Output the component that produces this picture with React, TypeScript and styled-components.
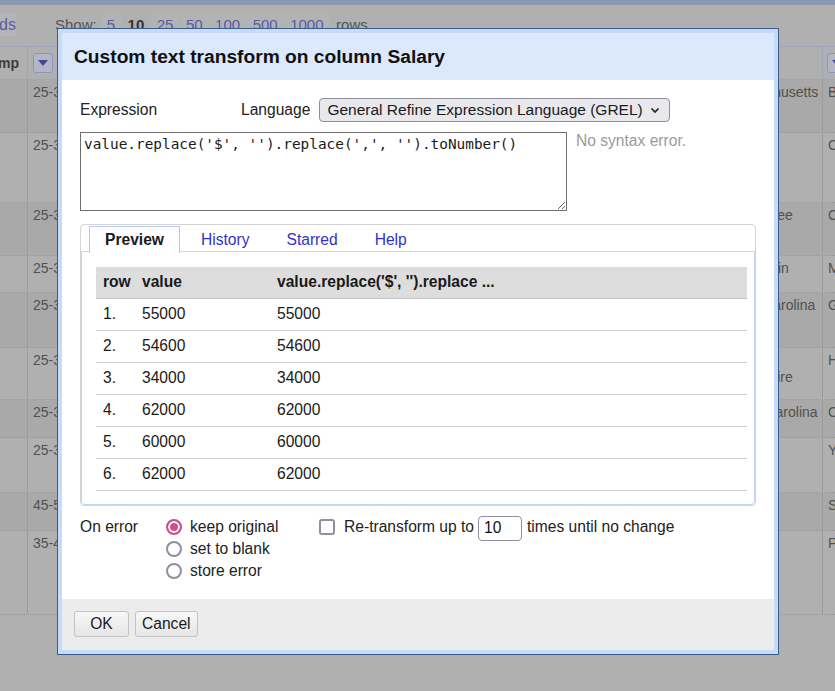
import React from "react";
import styled, { createGlobalStyle } from "styled-components";

const GlobalStyle = createGlobalStyle`
  html, body { margin: 0; padding: 0; }
  body {
    width: 835px;
    height: 691px;
    overflow: hidden;
    background: #b0b0b0;
    font-family: "Liberation Sans", Arial, sans-serif;
  }
`;

/* ---------- dimmed background (grid behind the dialog) ---------- */

const Page = styled.div`
  position: relative;
  width: 835px;
  height: 691px;
  overflow: hidden;
  background: #b0b0b0;
  color: #505050;
`;

const TopStrip = styled.div`
  height: 5px;
  background: #8e99b4;
`;

const Toolbar = styled.div`
  height: 41px;
  display: flex;
  align-items: center;
  font-size: 15px;
  color: #555;
  padding-bottom: 2px;
  box-sizing: border-box;
`;

const ModeLink = styled.div`
  width: 16px;
  height: 23px;
  margin-right: 39px;
  background: #b5b5b7;
  color: #5a5aa8;
  display: flex;
  justify-content: flex-end;
  align-items: center;
  overflow: hidden;
  white-space: nowrap;
  font-size: 16px;
`;

const ShowLabel = styled.span`
  margin-right: 4px;
`;

const PageSize = styled.span<{ $current?: boolean }>`
  padding: 3px 6px;
  margin-right: 0.5px;
  color: ${(p) => (p.$current ? "#333" : "#5a5aa8")};
  font-weight: ${(p) => (p.$current ? "bold" : "normal")};
  background: ${(p) => (p.$current ? "transparent" : "#b3b3b4")};
`;

const RowsLabel = styled.span`
  margin-left: 6px;
`;

const HeaderRow = styled.div`
  height: 34px;
  box-sizing: border-box;
  display: flex;
  border-top: 1px solid #9da5bf;
  border-bottom: 1px solid #9da5bf;
  font-size: 14px;
  font-weight: bold;
  color: #3c3c3c;
`;

const HeadFirst = styled.div`
  width: 28px;
  box-sizing: border-box;
  border-right: 1px solid #9da5bf;
  display: flex;
  justify-content: flex-end;
  align-items: center;
  padding-right: 8px;
  overflow: hidden;
  white-space: nowrap;
`;

const HeadCell = styled.div<{ $w?: number; $pad: number; $line?: boolean }>`
  ${(p) => (p.$w ? `width: ${p.$w}px;` : "flex: 1;")}
  box-sizing: border-box;
  display: flex;
  align-items: center;
  gap: 4px;
  padding-left: ${(p) => p.$pad}px;
  white-space: nowrap;
  overflow: hidden;
  ${(p) => (p.$line ? "border-left: 1px solid #9da5bf;" : "")}
`;

const ColMenu = styled.div`
  width: 20px;
  height: 20px;
  flex: none;
  box-sizing: border-box;
  border: 1px solid #8d93c4;
  border-radius: 3px;
  background: #b5b5c4;
  display: flex;
  align-items: center;
  justify-content: center;
`;

const GridRow = styled.div<{ $h: number; $odd: boolean }>`
  height: ${(p) => p.$h}px;
  box-sizing: border-box;
  display: flex;
  background: ${(p) => (p.$odd ? "#a9a9a9" : "#b0b0b0")};
  border-bottom: 1px dotted #999;
  font-size: 14px;
  line-height: 17px;
  color: #505050;
`;

const CellFirst = styled.div`
  width: 28px;
  box-sizing: border-box;
  border-right: 1px solid #9c9c9c;
`;

const Cell = styled.div<{ $w?: number; $pad: number; $line?: boolean }>`
  ${(p) => (p.$w ? `width: ${p.$w}px;` : "flex: 1;")}
  box-sizing: border-box;
  padding: 4px 0 0 ${(p) => p.$pad}px;
  overflow: hidden;
  ${(p) => (p.$line ? "border-left: 1px solid #9c9c9c; white-space: nowrap;" : "")}
`;

/* ---------- dialog ---------- */

const Dialog = styled.div`
  position: absolute;
  left: 57px;
  top: 28px;
  width: 722px;
  height: 627px;
  box-sizing: border-box;
  border: 1px solid #3a5a8a;
  background: #c6dbf8;
  padding: 4px;
  display: flex;
  flex-direction: column;
  color: #222;
`;

const DialogHeader = styled.div`
  height: 47px;
  flex: none;
  background: #dce8fc;
  padding: 0 12px;
  display: flex;
  align-items: center;
  font-size: 19.2px;
  font-weight: bold;
  color: #111;
`;

const DialogBody = styled.div`
  flex: 1;
  background: #fff;
  padding: 18px 18px 0;
  display: flex;
  flex-direction: column;
  font-size: 15.6px;
`;

const DialogFooter = styled.div`
  height: 51px;
  flex: none;
  box-sizing: border-box;
  background: #ececec;
  padding: 12px 12px;
  display: flex;
  gap: 6px;
  align-items: flex-start;
`;

const ExprHead = styled.div`
  display: flex;
  align-items: center;
  height: 24px;
`;

const ExprLabel = styled.div`
  width: 161px;
`;

const LangLabel = styled.div`
  margin-right: 9px;
`;

const SelectBox = styled.div`
  width: 351px;
  height: 24px;
  box-sizing: border-box;
  border: 1px solid #8f8f9d;
  border-radius: 4px;
  background: #e9e9ed;
  display: flex;
  align-items: center;
  justify-content: space-between;
  padding: 0 9px 0 7px;
  font-size: 15.5px;
  color: #1a1a1a;
`;

const ExprRow = styled.div`
  display: flex;
  align-items: flex-start;
  margin-top: 10px;
`;

const ExprInput = styled.textarea`
  width: 487px;
  height: 79px;
  box-sizing: border-box;
  margin: 0;
  border: 1px solid #6e6e6e;
  padding: 3px 3px;
  font-family: "DejaVu Sans Mono", monospace;
  font-size: 14.4px;
  line-height: 17px;
  color: #1a1a1a;
  resize: both;
  outline: none;
`;

const Status = styled.div`
  margin-left: 9px;
  margin-top: 0;
  color: #9a9a9a;
`;

const TabsBox = styled.div`
  margin-top: 13px;
  height: 282px;
  box-sizing: border-box;
  border: 1px solid #d4d4d4;
  border-radius: 4px;
  display: flex;
  flex-direction: column;
`;

const TabNav = styled.div`
  display: flex;
  gap: 5px;
  padding: 1px 0 0 8px;
  height: 27px;
  box-sizing: border-box;
`;

const Tab = styled.div<{ $active?: boolean }>`
  height: 27px;
  box-sizing: border-box;
  padding: 0 15px;
  border: 1px solid ${(p) => (p.$active ? "#b3cbef" : "transparent")};
  border-bottom: none;
  background: ${(p) => (p.$active ? "#fff" : "transparent")};
  color: ${(p) => (p.$active ? "#1a1a1a" : "#3131cc")};
  font-weight: ${(p) => (p.$active ? "bold" : "normal")};
  display: flex;
  align-items: center;
  position: relative;
  z-index: 1;
`;

const TabPanel = styled.div`
  flex: 1;
  border: 1px solid #c3d6f5;
  border-radius: 0 0 4px 4px;
  margin-top: -1px;
  padding: 15px 5px 0 14px;
`;

const PreviewTable = styled.table`
  width: 651px;
  table-layout: fixed;
  border-collapse: collapse;
  font-size: 15.6px;
  color: #1a1a1a;
`;

const Th = styled.th<{ $w?: number }>`
  ${(p) => (p.$w ? `width: ${p.$w}px;` : "")}
  height: 31px;
  padding: 0 7px;
  box-sizing: border-box;
  text-align: left;
  background: #dddddd;
  border-bottom: 1px solid #c4c4c4;
  font-weight: bold;
  white-space: nowrap;
  overflow: hidden;
`;

const Td = styled.td`
  height: 32px;
  padding: 0 7px;
  box-sizing: border-box;
  border-bottom: 1px solid #cfcfcf;
`;

const Options = styled.div`
  display: flex;
  margin-top: 10px;
  line-height: 22px;
`;

const OptLabel = styled.div`
  width: 86px;
`;

const RadioGroup = styled.div`
  width: 153px;
  display: flex;
  flex-direction: column;
`;

const RadioRow = styled.label`
  display: flex;
  align-items: center;
  gap: 8px;
  height: 22px;
`;

const Radio = styled.input.attrs({ type: "radio" })`
  appearance: none;
  width: 16px;
  height: 16px;
  margin: 0;
  box-sizing: border-box;
  border-radius: 50%;
  border: 2px solid #8f8f9d;
  background: #fff;
  &:checked {
    border-color: #c9518d;
    background: #c9518d;
    box-shadow: inset 0 0 0 2px #fff;
  }
`;

const CheckRow = styled.div`
  display: flex;
  align-items: center;
  height: 22px;
`;

const Check = styled.input.attrs({ type: "checkbox" })`
  appearance: none;
  width: 16px;
  height: 16px;
  margin: 0 9px 0 0;
  box-sizing: border-box;
  border: 2px solid #8f8f9d;
  border-radius: 3px;
  background: #fff;
`;

const TimesInput = styled.input`
  width: 44px;
  height: 25px;
  box-sizing: border-box;
  margin: 0 5px 0 4px;
  border: 1px solid #8f8f9d;
  border-radius: 4px;
  padding: 0 5px;
  font-family: "Liberation Sans", Arial, sans-serif;
  font-size: 15.6px;
  color: #111;
  position: relative;
  top: 1px;
`;

const Button = styled.button`
  height: 26px;
  min-width: 55px;
  box-sizing: border-box;
  padding: 0 6px;
  border: 1px solid #c3c3c3;
  border-radius: 3px;
  background: linear-gradient(#f7f7f7, #e6e6e6);
  font-family: "Liberation Sans", Arial, sans-serif;
  font-size: 15.6px;
  color: #1a1a1a;
`;

const Triangle = () => (
  <svg width="10" height="6" viewBox="0 0 10 6">
    <path d="M0 0 L10 0 L5 6 Z" fill="#45459c" />
  </svg>
);

const Chevron = () => (
  <svg width="10" height="7" viewBox="0 0 10 7">
    <path d="M1.5 1.5 L5 5 L8.5 1.5" fill="none" stroke="#222" strokeWidth="1.7" />
  </svg>
);

const gridRows = [
  { h: 53, a: "25-34", s: "Massachusetts", c: "Boston" },
  { h: 70, a: "25-34", s: "", c: "Chicago" },
  { h: 53, a: "25-34", s: "Tennessee", c: "Chattanooga" },
  { h: 37, a: "25-34", s: "Wisconsin", c: "Madison" },
  { h: 55, a: "25-34", s: "North Carolina", c: "Greensboro" },
  { h: 52, a: "25-34", s: "New Hampshire", c: "Hanover" },
  { h: 38, a: "25-34", s: "South Carolina", c: "Columbia" },
  { h: 55, a: "25-34", s: "", c: "York" },
  { h: 38, a: "45-54", s: "", c: "Seattle" },
  { h: 84, a: "35-44", s: "", c: "Portland" },
];

const preview = ["55000", "54600", "34000", "62000", "60000", "62000"];

export default function App() {
  return (
    <>
      <GlobalStyle />
      <Page>
        <TopStrip />
        <Toolbar>
          <ModeLink>records</ModeLink>
          <ShowLabel>Show:</ShowLabel>
          <PageSize>5</PageSize>
          <PageSize $current>10</PageSize>
          <PageSize>25</PageSize>
          <PageSize>50</PageSize>
          <PageSize>100</PageSize>
          <PageSize>500</PageSize>
          <PageSize>1000</PageSize>
          <RowsLabel>rows</RowsLabel>
        </Toolbar>
        <HeaderRow>
          <HeadFirst>Timestamp</HeadFirst>
          <HeadCell $w={688} $pad={5}>
            <ColMenu><Triangle /></ColMenu>
            Age
          </HeadCell>
          <HeadCell $w={106} $pad={5}>
            <ColMenu><Triangle /></ColMenu>
            State
          </HeadCell>
          <HeadCell $pad={4} $line>
            <ColMenu><Triangle /></ColMenu>
          </HeadCell>
        </HeaderRow>
        {gridRows.map((r, i) => (
          <GridRow key={i} $h={r.h} $odd={i % 2 === 0}>
            <CellFirst />
            <Cell $w={688} $pad={5}>{r.a}</Cell>
            <Cell $w={106} $pad={9}>{r.s}</Cell>
            <Cell $pad={5} $line>{r.c}</Cell>
          </GridRow>
        ))}

        <Dialog>
          <DialogHeader>Custom text transform on column Salary</DialogHeader>
          <DialogBody>
            <ExprHead>
              <ExprLabel>Expression</ExprLabel>
              <LangLabel>Language</LangLabel>
              <SelectBox>
                <span>General Refine Expression Language (GREL)</span>
                <Chevron />
              </SelectBox>
            </ExprHead>
            <ExprRow>
              <ExprInput
                spellCheck={false}
                defaultValue={"value.replace('$', '').replace(',', '').toNumber()"}
              />
              <Status>No syntax error.</Status>
            </ExprRow>
            <TabsBox>
              <TabNav>
                <Tab $active>Preview</Tab>
                <Tab>History</Tab>
                <Tab>Starred</Tab>
                <Tab>Help</Tab>
              </TabNav>
              <TabPanel>
                <PreviewTable>
                  <thead>
                    <tr>
                      <Th $w={39}>row</Th>
                      <Th $w={135}>value</Th>
                      <Th>value.replace('$', '').replace ...</Th>
                    </tr>
                  </thead>
                  <tbody>
                    {preview.map((v, i) => (
                      <tr key={i}>
                        <Td>{i + 1}.</Td>
                        <Td>{v}</Td>
                        <Td>{v}</Td>
                      </tr>
                    ))}
                  </tbody>
                </PreviewTable>
              </TabPanel>
            </TabsBox>
            <Options>
              <OptLabel>On error</OptLabel>
              <RadioGroup>
                <RadioRow>
                  <Radio name="onerror" defaultChecked />
                  keep original
                </RadioRow>
                <RadioRow>
                  <Radio name="onerror" />
                  set to blank
                </RadioRow>
                <RadioRow>
                  <Radio name="onerror" />
                  store error
                </RadioRow>
              </RadioGroup>
              <CheckRow>
                <Check />
                Re-transform up to
                <TimesInput defaultValue="10" />
                times until no change
              </CheckRow>
            </Options>
          </DialogBody>
          <DialogFooter>
            <Button>OK</Button>
            <Button>Cancel</Button>
          </DialogFooter>
        </Dialog>
      </Page>
    </>
  );
}
